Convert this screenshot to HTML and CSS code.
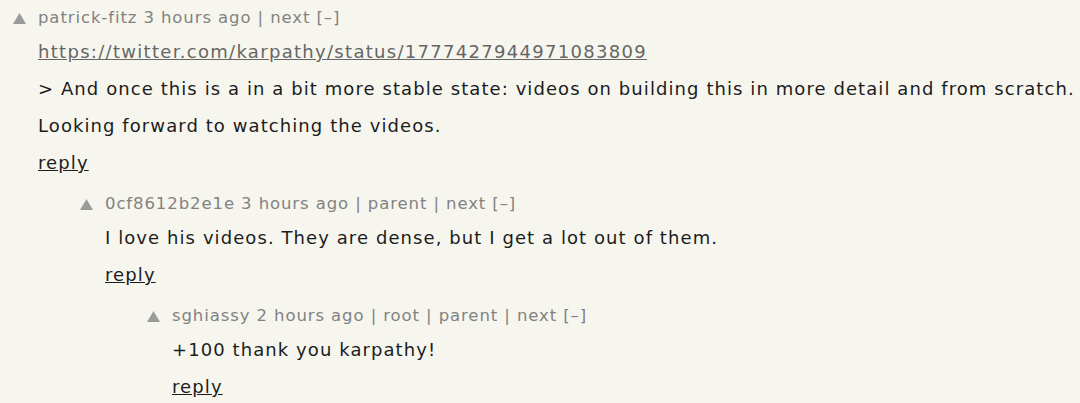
FILE: index.html
```html
<!DOCTYPE html>
<html>
<head>
<meta charset="utf-8">
<link rel="stylesheet" href="styles.css">
</head>
<body>
<div class="thread">
  <div class="comment lvl0">
    <div class="vote"><svg width="13" height="11" viewBox="0 0 13 11"><polygon points="6.5,0 13,11 0,11" fill="#9a9a9a"/></svg></div>
    <div class="body">
      <div class="head">patrick-fitz 3 hours ago | next [–]</div>
      <div class="text">
        <p><a class="link" href="#">https://twitter.com/karpathy/status/1777427944971083809</a></p>
        <p>&gt; And once this is a in a bit more stable state: videos on building this in more detail and from scratch.</p>
        <p>Looking forward to watching the videos.</p>
      </div>
      <div class="reply"><a href="#">reply</a></div>
    </div>
  </div>
  <div class="comment lvl1">
    <div class="vote"><svg width="13" height="11" viewBox="0 0 13 11"><polygon points="6.5,0 13,11 0,11" fill="#9a9a9a"/></svg></div>
    <div class="body">
      <div class="head">0cf8612b2e1e 3 hours ago | parent | next [–]</div>
      <div class="text">
        <p>I love his videos. They are dense, but I get a lot out of them.</p>
      </div>
      <div class="reply"><a href="#">reply</a></div>
    </div>
  </div>
  <div class="comment lvl2">
    <div class="vote"><svg width="13" height="11" viewBox="0 0 13 11"><polygon points="6.5,0 13,11 0,11" fill="#9a9a9a"/></svg></div>
    <div class="body">
      <div class="head">sghiassy 2 hours ago | root | parent | next [–]</div>
      <div class="text">
        <p>+100 thank you karpathy!</p>
      </div>
      <div class="reply"><a href="#">reply</a></div>
    </div>
  </div>
</div>
</body>
</html>
```

FILE: styles.css
```css
html, body {
  margin: 0;
  padding: 0;
  background: #f6f6ef;
}
body {
  font-family: "DejaVu Sans", Verdana, sans-serif;
  color: #1c1c1c;
  width: 1080px;
  height: 403px;
  overflow: hidden;
}
.thread {
  display: flex;
  flex-direction: column;
}
.comment {
  display: flex;
  padding-bottom: 5px;
}
.lvl0 { padding-left: 13px; }
.lvl1 { padding-left: 80px; }
.lvl2 { padding-left: 147px; }
.vote {
  width: 25px;
  flex: none;
  padding-top: 13px;
}
.vote svg { display: block; }
.body {
  flex: 1;
  min-width: 0;
}
.head {
  margin-top: 3px;
  height: 30px;
  line-height: 30px;
  font-size: 16.5px;
  letter-spacing: 0.9px;
  color: #828282;
  white-space: nowrap;
}
.text p {
  margin: 0;
  font-size: 18px;
  letter-spacing: 1.08px;
  line-height: 37px;
  white-space: nowrap;
}
.link {
  color: #666;
  letter-spacing: 1.3px;
  text-decoration: underline;
}
.reply {
  font-size: 18px;
  letter-spacing: 1.1px;
  line-height: 37px;
}
.reply a {
  color: #1c1c1c;
  text-decoration: underline;
}
```
